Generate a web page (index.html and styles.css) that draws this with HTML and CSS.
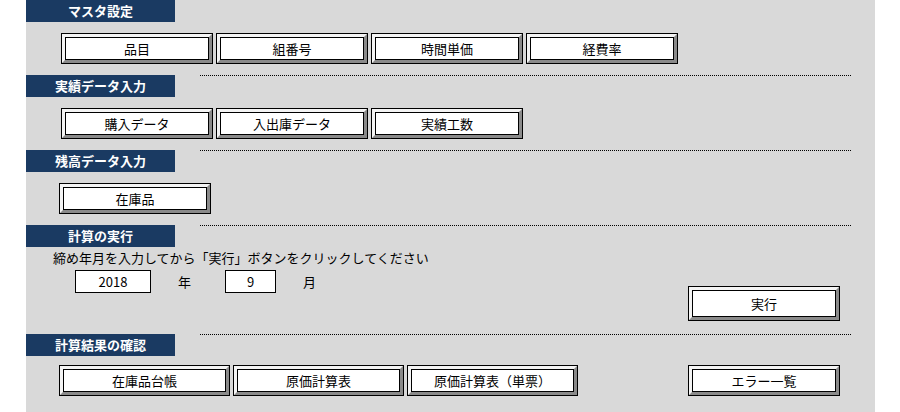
FILE: index.html
```html
<!DOCTYPE html>
<html lang="ja">
<head>
  <meta charset="UTF-8">
  <title>メニュー</title>
  <link rel="stylesheet" href="styles.css">
</head>
<body>
  <div class="panel">
    <div class="sec-head">
      <h2>マスタ設定</h2>
    </div>
    <div class="btn-row">
      <button type="button" class="btn">品目</button>
      <button type="button" class="btn">組番号</button>
      <button type="button" class="btn">時間単価</button>
      <button type="button" class="btn">経費率</button>
    </div>

    <div class="sec-head">
      <h2>実績データ入力</h2>
      <div class="rule"></div>
    </div>
    <div class="btn-row">
      <button type="button" class="btn">購入データ</button>
      <button type="button" class="btn">入出庫データ</button>
      <button type="button" class="btn">実績工数</button>
    </div>

    <div class="sec-head">
      <h2>残高データ入力</h2>
      <div class="rule"></div>
    </div>
    <div class="btn-row tight">
      <button type="button" class="btn">在庫品</button>
    </div>

    <div class="sec-head">
      <h2>計算の実行</h2>
      <div class="rule"></div>
    </div>
    <div class="calc">
      <div class="calc-form">
        <p class="note">締め年月を入力してから「実行」ボタンをクリックしてください</p>
        <div class="ym">
          <input type="text" class="year" value="2018">
          <span class="unit">年</span>
          <input type="text" class="month" value="9">
          <span class="unit">月</span>
        </div>
      </div>
      <div class="run-wrap">
        <button type="button" class="btn run">実行</button>
      </div>
    </div>

    <div class="sec-head">
      <h2>計算結果の確認</h2>
      <div class="rule"></div>
    </div>
    <div class="btn-row tight last">
      <button type="button" class="btn wide">在庫品台帳</button>
      <button type="button" class="btn wide">原価計算表</button>
      <button type="button" class="btn wide">原価計算表（単票）</button>
      <button type="button" class="btn push">エラー一覧</button>
    </div>
  </div>
</body>
</html>
```

FILE: styles.css
```css
* {
  box-sizing: border-box;
}
body {
  margin: 0;
  background: #fff;
  font-family: "Noto Sans CJK JP", sans-serif;
  font-size: 13px;
  color: #000;
}
.panel {
  margin-left: 26px;
  width: 849px;
  min-height: 412px;
  background: #d9d9d9;
}
.sec-head {
  display: flex;
  height: 22px;
}
.sec-head h2 {
  margin: 0;
  width: 149px;
  flex: none;
  background: #1a3a62;
  color: #fff;
  font-size: 13px;
  font-weight: bold;
  line-height: 22px;
  text-align: center;
}
.rule {
  flex: 1;
  margin: 0 24px 0 25px;
  border-top: 1px dotted #000;
}
.btn-row {
  display: flex;
  gap: 5px;
  padding: 12px 36px 12px 36px;
}
.btn-row.tight {
  padding-left: 34px;
}
.btn-row.last {
  padding-top: 10px;
}
.btn {
  width: 150px;
  height: 29px;
  padding: 0;
  border: 3px solid;
  border-color: #f4f4f4 #8a8a8a #8a8a8a #f4f4f4;
  outline: 1px solid #000;
  box-shadow: inset 0 0 0 1px #000;
  background: #fff;
  font-family: "Noto Sans CJK JP", sans-serif;
  font-size: 13px;
  color: #000;
}
.btn.wide {
  width: 169px;
}
.btn.push {
  margin-left: auto;
}
.btn.run {
  height: 33px;
}
.calc {
  display: flex;
  justify-content: space-between;
  padding: 3px 36px 14px 27px;
}
.note {
  margin: 0;
  line-height: 16px;
}
.ym {
  display: flex;
  align-items: center;
  margin-top: 4px;
  padding-left: 22px;
}
.ym input {
  height: 23px;
  border: 1px solid #000;
  background: #fff;
  font-family: "Noto Sans CJK JP", sans-serif;
  font-size: 13px;
  text-align: center;
  padding: 0;
}
.year {
  width: 76px;
}
.month {
  width: 51px;
}
.unit {
  margin: 0 34px 0 27px;
}
.run-wrap {
  padding-top: 37px;
}
```
